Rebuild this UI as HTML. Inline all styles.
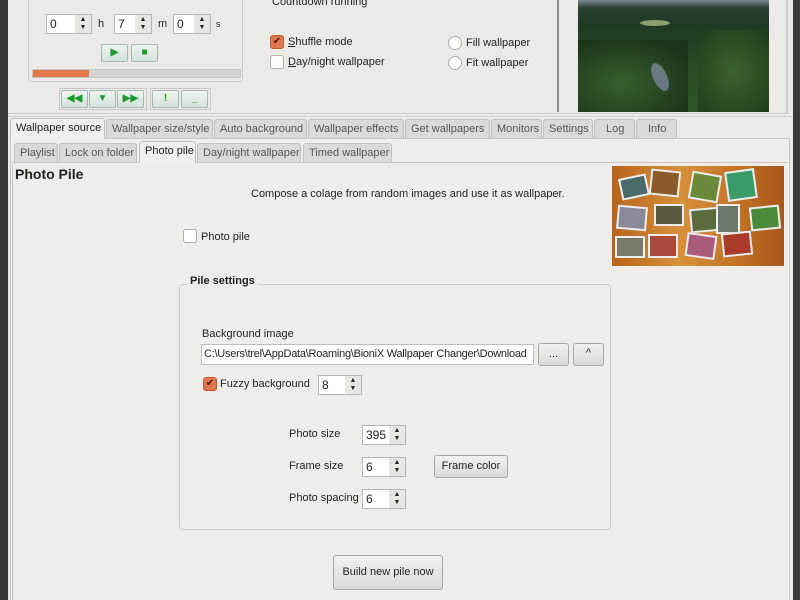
<!DOCTYPE html>
<html><head><meta charset="utf-8"><style>
*{box-sizing:border-box}
body{margin:0;width:800px;height:600px;overflow:hidden;background:#eceae6;font-family:"Liberation Sans",sans-serif;font-size:11px;color:#222;position:relative}
.a{position:absolute}
.spin{position:absolute;background:#fff;border:1px solid #b8b6b0;height:20px;padding:2px 0 0 3px;font-size:12px}
.spin .ar{position:absolute;right:0;top:0;width:16px;height:18px;background:#e8e6e2;font-size:7px;line-height:8px;text-align:center;padding-top:1px}
.btn{position:absolute;border:1px solid #a9a7a2;border-radius:3px;background:linear-gradient(#f2f1ee,#dcdad5);text-align:center;font-size:11px}
.gbtn{position:absolute;width:27px;height:18px;border:1px solid #a8b8b0;border-radius:2px;background:linear-gradient(#eef4f0,#d4e2da);color:#1a9a2a;text-align:center;font-size:10px;line-height:16px;font-weight:bold}
.cb{position:absolute;width:14px;height:14px;border:1px solid #b0aea8;border-radius:3px;background:#fff}
.cb.on{background:#e2774f;border-color:#c05a36;color:#4a1a00;font-size:10px;line-height:12px;text-align:center}
.rd{position:absolute;width:14px;height:14px;border:1px solid #b0aea8;border-radius:50%;background:#fff}
.tab{position:absolute;height:19px;border:1px solid #c2c0ba;border-bottom:none;border-radius:3px 3px 0 0;background:#dcdad6;color:#555;padding:3px 5px 0;font-size:11px;white-space:nowrap}
.tab.sel{background:#f1efeb;color:#222}
</style></head><body>
<div class="a" style="left:0;top:0;width:8px;height:600px;background:#3a3936"></div>
<div class="a" style="left:793px;top:0;width:7px;height:600px;background:#3a3936"></div>
<div class="a" style="left:8px;top:0;width:780px;height:114px;border-right:2px solid #cfcdc8;border-bottom:1px solid #cfcdc8"></div>
<div class="a" style="left:28px;top:-10px;width:215px;height:92px;border:1px solid #cfcdc8;border-radius:4px"></div>
<div class="spin" style="left:46px;top:14px;width:46px">0<div class="ar">▲<br>▼</div></div>
<div class="a" style="left:98px;top:18px">h</div>
<div class="spin" style="left:114px;top:14px;width:38px">7<div class="ar">▲<br>▼</div></div>
<div class="a" style="left:158px;top:18px">m</div>
<div class="spin" style="left:173px;top:14px;width:38px">0<div class="ar">▲<br>▼</div></div>
<div class="a" style="left:216px;top:19px;font-size:9px">s</div>
<div class="gbtn" style="left:101px;top:44px">▶</div>
<div class="gbtn" style="left:131px;top:44px">■</div>
<div class="a" style="left:32px;top:69px;width:209px;height:9px;background:#d6d4d0;border:1px solid #cac8c3"><div style="width:56px;height:100%;background:#e2774f"></div></div>
<div class="a" style="left:59px;top:88px;width:88px;height:22px;border:1px solid #cac8c3"></div>
<div class="a" style="left:150px;top:88px;width:61px;height:22px;border:1px solid #cac8c3"></div>
<div class="gbtn" style="left:61px;top:90px">◀◀</div>
<div class="gbtn" style="left:89px;top:90px">▼</div>
<div class="gbtn" style="left:117px;top:90px">▶▶</div>
<div class="gbtn" style="left:152px;top:90px">!</div>
<div class="gbtn" style="left:181px;top:90px">_</div>
<div class="a" style="left:272px;top:-4px">Countdown running</div>
<div class="cb on" style="left:270px;top:35px">✔</div><div class="a" style="left:288px;top:36px"><u>S</u>huffle mode</div>
<div class="cb" style="left:270px;top:55px"></div><div class="a" style="left:288px;top:56px"><u>D</u>ay/night wallpaper</div>
<div class="rd" style="left:448px;top:36px"></div><div class="a" style="left:466px;top:37px">Fill wallpaper</div>
<div class="rd" style="left:448px;top:56px"></div><div class="a" style="left:466px;top:57px">Fit wallpaper</div>
<div class="a" style="left:557px;top:0;width:2px;height:112px;background:#8a8884"></div>
<div class="a" style="left:578px;top:0;width:191px;height:112px;background:linear-gradient(#7a8890 0,#2a4032 8px,#1e3a22 25px,#2a4a26 60%,#2f5428 100%);overflow:hidden">
<div style="position:absolute;left:0;top:40px;width:110px;height:72px;background:radial-gradient(ellipse at 40% 60%,#3a6030,#1a3218 80%);opacity:.9"></div>
<div style="position:absolute;left:120px;top:30px;width:71px;height:82px;background:radial-gradient(ellipse,#40652e,#1e3a1c);opacity:.9"></div>
<div style="position:absolute;left:62px;top:20px;width:30px;height:6px;background:#8aa070;border-radius:50%"></div>
<div style="position:absolute;left:75px;top:62px;width:14px;height:30px;background:#6a7a82;border-radius:50%;transform:rotate(-25deg)"></div></div>
<div class="a" style="left:8px;top:116px;width:785px;height:1px;background:#d2d0cb"></div>
<div class="a" style="left:10px;top:138px;width:780px;height:462px;border:1px solid #c8c6c0;border-bottom:none;background:#f0eeea"></div>
<div class="tab sel" style="left:10px;top:118px;width:95px;height:21px">Wallpaper source</div>
<div class="tab" style="left:106px;top:119px;width:107px">Wallpaper size/style</div>
<div class="tab" style="left:214px;top:119px;width:93px">Auto background</div>
<div class="tab" style="left:308px;top:119px;width:96px">Wallpaper effects</div>
<div class="tab" style="left:405px;top:119px;width:85px">Get wallpapers</div>
<div class="tab" style="left:491px;top:119px;width:51px">Monitors</div>
<div class="tab" style="left:543px;top:119px;width:50px">Settings</div>
<div class="tab" style="left:594px;top:119px;width:41px;padding-left:11px">Log</div>
<div class="tab" style="left:636px;top:119px;width:41px;padding-left:11px">Info</div>
<div class="a" style="left:12px;top:162px;width:776px;height:438px;border-top:1px solid #c8c6c0;border-left:1px solid #c8c6c0;background:#efede9"></div>
<div class="tab" style="left:14px;top:143px;width:44px">Playlist</div>
<div class="tab" style="left:59px;top:143px;width:78px">Lock on folder</div>
<div class="tab sel" style="left:139px;top:141px;width:57px;height:22px">Photo pile</div>
<div class="tab" style="left:197px;top:143px;width:104px">Day/night wallpaper</div>
<div class="tab" style="left:303px;top:143px;width:89px">Timed wallpaper</div>
<div class="a" style="left:15px;top:166px;font-size:14px;font-weight:bold">Photo Pile</div>
<div class="a" style="left:251px;top:188px">Compose a colage from random images and use it as wallpaper.</div>
<div class="cb" style="left:183px;top:229px"></div><div class="a" style="left:201px;top:231px">Photo pile</div>
<div class="a" style="left:612px;top:166px;width:172px;height:100px;background:linear-gradient(90deg,#b8641c,#d8903a 40%,#c57428 70%,#a8561a)">
<div class="a" style="left:8px;top:10px;width:28px;height:22px;background:#4a6a6a;border:2px solid #eee;transform:rotate(-12deg)"></div>
<div class="a" style="left:38px;top:4px;width:30px;height:26px;background:#8a5a2a;border:2px solid #eee;transform:rotate(6deg)"></div>
<div class="a" style="left:78px;top:7px;width:30px;height:28px;background:#6a8a3a;border:2px solid #eee;transform:rotate(10deg)"></div>
<div class="a" style="left:114px;top:4px;width:30px;height:30px;background:#3a9a6a;border:2px solid #eee;transform:rotate(-8deg)"></div>
<div class="a" style="left:5px;top:40px;width:30px;height:24px;background:#8a8a9a;border:2px solid #eee;transform:rotate(5deg)"></div>
<div class="a" style="left:42px;top:38px;width:30px;height:22px;background:#5a5a40;border:2px solid #eee"></div>
<div class="a" style="left:78px;top:42px;width:30px;height:24px;background:#5a6a3a;border:2px solid #eee;transform:rotate(-5deg)"></div>
<div class="a" style="left:104px;top:38px;width:24px;height:30px;background:#6a7a6a;border:2px solid #eee"></div>
<div class="a" style="left:138px;top:40px;width:30px;height:24px;background:#4a8a3a;border:2px solid #eee;transform:rotate(-6deg)"></div>
<div class="a" style="left:3px;top:70px;width:30px;height:22px;background:#7a7a6a;border:2px solid #eee"></div>
<div class="a" style="left:36px;top:68px;width:30px;height:24px;background:#aa4a3a;border:2px solid #eee"></div>
<div class="a" style="left:74px;top:68px;width:30px;height:24px;background:#aa5a7a;border:2px solid #eee;transform:rotate(8deg)"></div>
<div class="a" style="left:110px;top:66px;width:30px;height:24px;background:#aa3a2a;border:2px solid #eee;transform:rotate(-6deg)"></div>
</div>
<div class="a" style="left:179px;top:284px;width:432px;height:246px;border:1px solid #cdcbc6;border-radius:4px"></div>
<div class="a" style="left:187px;top:275px;padding:0 3px;background:#efede9;font-weight:bold">Pile settings</div>
<div class="a" style="left:202px;top:328px">Background image</div>
<div class="a" style="left:201px;top:344px;width:333px;height:21px;background:#fff;border:1px solid #c0beb8;padding:3px 2px;white-space:nowrap;overflow:hidden;font-size:11px;letter-spacing:-0.25px">C:\Users\trel\AppData\Roaming\BioniX Wallpaper Changer\Download</div>
<div class="btn" style="left:538px;top:343px;width:31px;height:23px;line-height:20px">...</div>
<div class="btn" style="left:573px;top:343px;width:31px;height:23px;line-height:18px">^</div>
<div class="cb on" style="left:203px;top:377px">✔</div><div class="a" style="left:220px;top:378px">Fuzzy background</div>
<div class="spin" style="left:318px;top:375px;width:44px">8<div class="ar">▲<br>▼</div></div>
<div class="a" style="left:289px;top:428px">Photo size</div>
<div class="spin" style="left:362px;top:425px;width:44px">395<div class="ar">▲<br>▼</div></div>
<div class="a" style="left:289px;top:460px">Frame size</div>
<div class="spin" style="left:362px;top:457px;width:44px">6<div class="ar">▲<br>▼</div></div>
<div class="btn" style="left:434px;top:455px;width:74px;height:23px;line-height:20px">Frame color</div>
<div class="a" style="left:289px;top:492px">Photo spacing</div>
<div class="spin" style="left:362px;top:489px;width:44px">6<div class="ar">▲<br>▼</div></div>
<div class="btn" style="left:333px;top:555px;width:110px;height:35px;line-height:32px">Build new pile now</div>
</body></html>
